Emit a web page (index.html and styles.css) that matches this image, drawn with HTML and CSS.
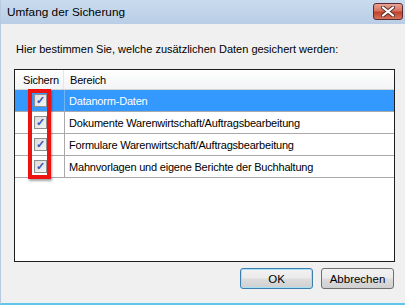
FILE: index.html
```html
<!DOCTYPE html>
<html lang="de">
<head>
<meta charset="UTF-8">
<title>Umfang der Sicherung</title>
<link rel="stylesheet" href="styles.css">
</head>
<body>
    <div class="window">
        <div class="titlebar">
            <span class="title">Umfang der Sicherung</span>
            <button type="button" class="close-btn">
                <svg width="14" height="11" viewBox="0 0 14 11">
                    <path d="M2 1.5 L12 9.5 M12 1.5 L2 9.5" stroke="#5a3030" stroke-width="4" stroke-linecap="round"/>
                    <path d="M2 1.5 L12 9.5 M12 1.5 L2 9.5" stroke="#ffffff" stroke-width="2.2" stroke-linecap="round"/>
                </svg>
            </button>
        </div>
        <div class="content">
            <p class="intro">Hier bestimmen Sie, welche zusätzlichen Daten gesichert werden:</p>
            <div class="listview">
                <div class="header">
                    <div class="col-check">Sichern</div>
                    <div class="col-area">Bereich</div>
                </div>
                <div class="row selected">
                    <div class="col-check"><span class="checkbox">&#10003;</span></div>
                    <div class="col-area">Datanorm-Daten</div>
                </div>
                <div class="row">
                    <div class="col-check"><span class="checkbox">&#10003;</span></div>
                    <div class="col-area">Dokumente Warenwirtschaft/Auftragsbearbeitung</div>
                </div>
                <div class="row">
                    <div class="col-check"><span class="checkbox">&#10003;</span></div>
                    <div class="col-area">Formulare Warenwirtschaft/Auftragsbearbeitung</div>
                </div>
                <div class="row">
                    <div class="col-check"><span class="checkbox">&#10003;</span></div>
                    <div class="col-area">Mahnvorlagen und eigene Berichte der Buchhaltung</div>
                </div>
                <div class="highlight"></div>
            </div>
            <div class="buttons">
                <button type="button" class="btn btn-default">OK</button>
                <button type="button" class="btn">Abbrechen</button>
            </div>
        </div>
    </div>
</body>
</html>
```

FILE: styles.css
```css
body {
    margin: 0;
    padding: 0;
    width: 405px;
    height: 305px;
    overflow: hidden;
    font-family: "Liberation Sans", Arial, sans-serif;
    font-size: 11px;
    color: #000;
    background: #f0f0f0;
}

.window {
    height: 303px;
    display: flex;
    flex-direction: column;
    border-left: 1px solid #b6cbe2;
    border-bottom: 2px solid #5ec6ea;
    background: #f0f0f0;
}

.titlebar {
    height: 24px;
    display: flex;
    align-items: center;
    justify-content: space-between;
    padding-left: 6px;
    background: linear-gradient(to bottom, #c9dbee, #b9cee6);
}

.title {
    font-size: 11.8px;
    color: #000;
}

.close-btn {
    width: 30px;
    height: 17px;
    margin-right: 2px;
    margin-top: -2px;
    padding: 0;
    border: 1px solid #5b2a33;
    border-radius: 3px;
    background: linear-gradient(to bottom, #e8a496 0%, #d8735f 45%, #c0412a 55%, #d6735a 100%);
    display: flex;
    align-items: center;
    justify-content: center;
}

.content {
    flex: 1;
    display: flex;
    flex-direction: column;
    padding: 0 10px 0 13px;
}

.intro {
    margin: 18px 0 0 2px;
    height: 27px;
    line-height: 14px;
}

.listview {
    position: relative;
    width: 379px;
    height: 191px;
    border: 1px solid #1e1e1e;
    background: #fff;
    letter-spacing: -0.2px;
}

.header,
.row {
    display: flex;
    height: 21px;
    border-bottom: 1px solid #a9a9a9;
}

.header {
    height: 19px;
    background: linear-gradient(to bottom, #ffffff, #f3f4f6);
    border-bottom-color: #d5d5d5;
}

.header .col-check,
.header .col-area {
    display: flex;
    align-items: center;
}

.header .col-check {
    width: 49px;
    padding-left: 8px;
    box-sizing: border-box;
    border-right: 1px solid #e3e5e8;
}

.header .col-area {
    padding-left: 6px;
}

.row .col-check {
    width: 49px;
    display: flex;
    align-items: center;
    justify-content: center;
    border-right: 1px solid #a9a9a9;
}

.row .col-area {
    flex: 1;
    display: flex;
    align-items: center;
    padding-left: 4px;
}

.row.selected {
    background: #3399ff;
    color: #fff;
}

.row.selected .col-check {
    border-right-color: #6fb5fb;
}

.checkbox {
    width: 11px;
    height: 11px;
    border: 1px solid #8e8f8f;
    background: linear-gradient(to bottom right, #dcdcdc, #f4f4f4);
    color: #3b55b8;
    font-size: 11px;
    font-weight: bold;
    line-height: 11px;
    text-align: center;
    margin-left: 2px;
}

.highlight {
    position: absolute;
    left: 13px;
    top: 19px;
    width: 15px;
    height: 82px;
    border: 4px solid #ee1111;
    box-shadow: 1px 2px 2px rgba(0, 0, 0, 0.35);
}

.buttons {
    display: flex;
    justify-content: flex-end;
    gap: 8px;
    margin-top: 6px;
    padding-right: 1px;
}

.btn {
    width: 73px;
    height: 21px;
    padding: 0;
    font-family: "Liberation Sans", Arial, sans-serif;
    font-size: 11.5px;
    color: #000;
    border: 1px solid #707070;
    border-radius: 3px;
    background: linear-gradient(to bottom, #f2f2f2 0%, #ebebeb 48%, #dddddd 52%, #cfcfcf 100%);
}

.btn-default {
    border-color: #3c7fb1;
    box-shadow: inset 0 0 0 1px #a5e0f8;
}
```
